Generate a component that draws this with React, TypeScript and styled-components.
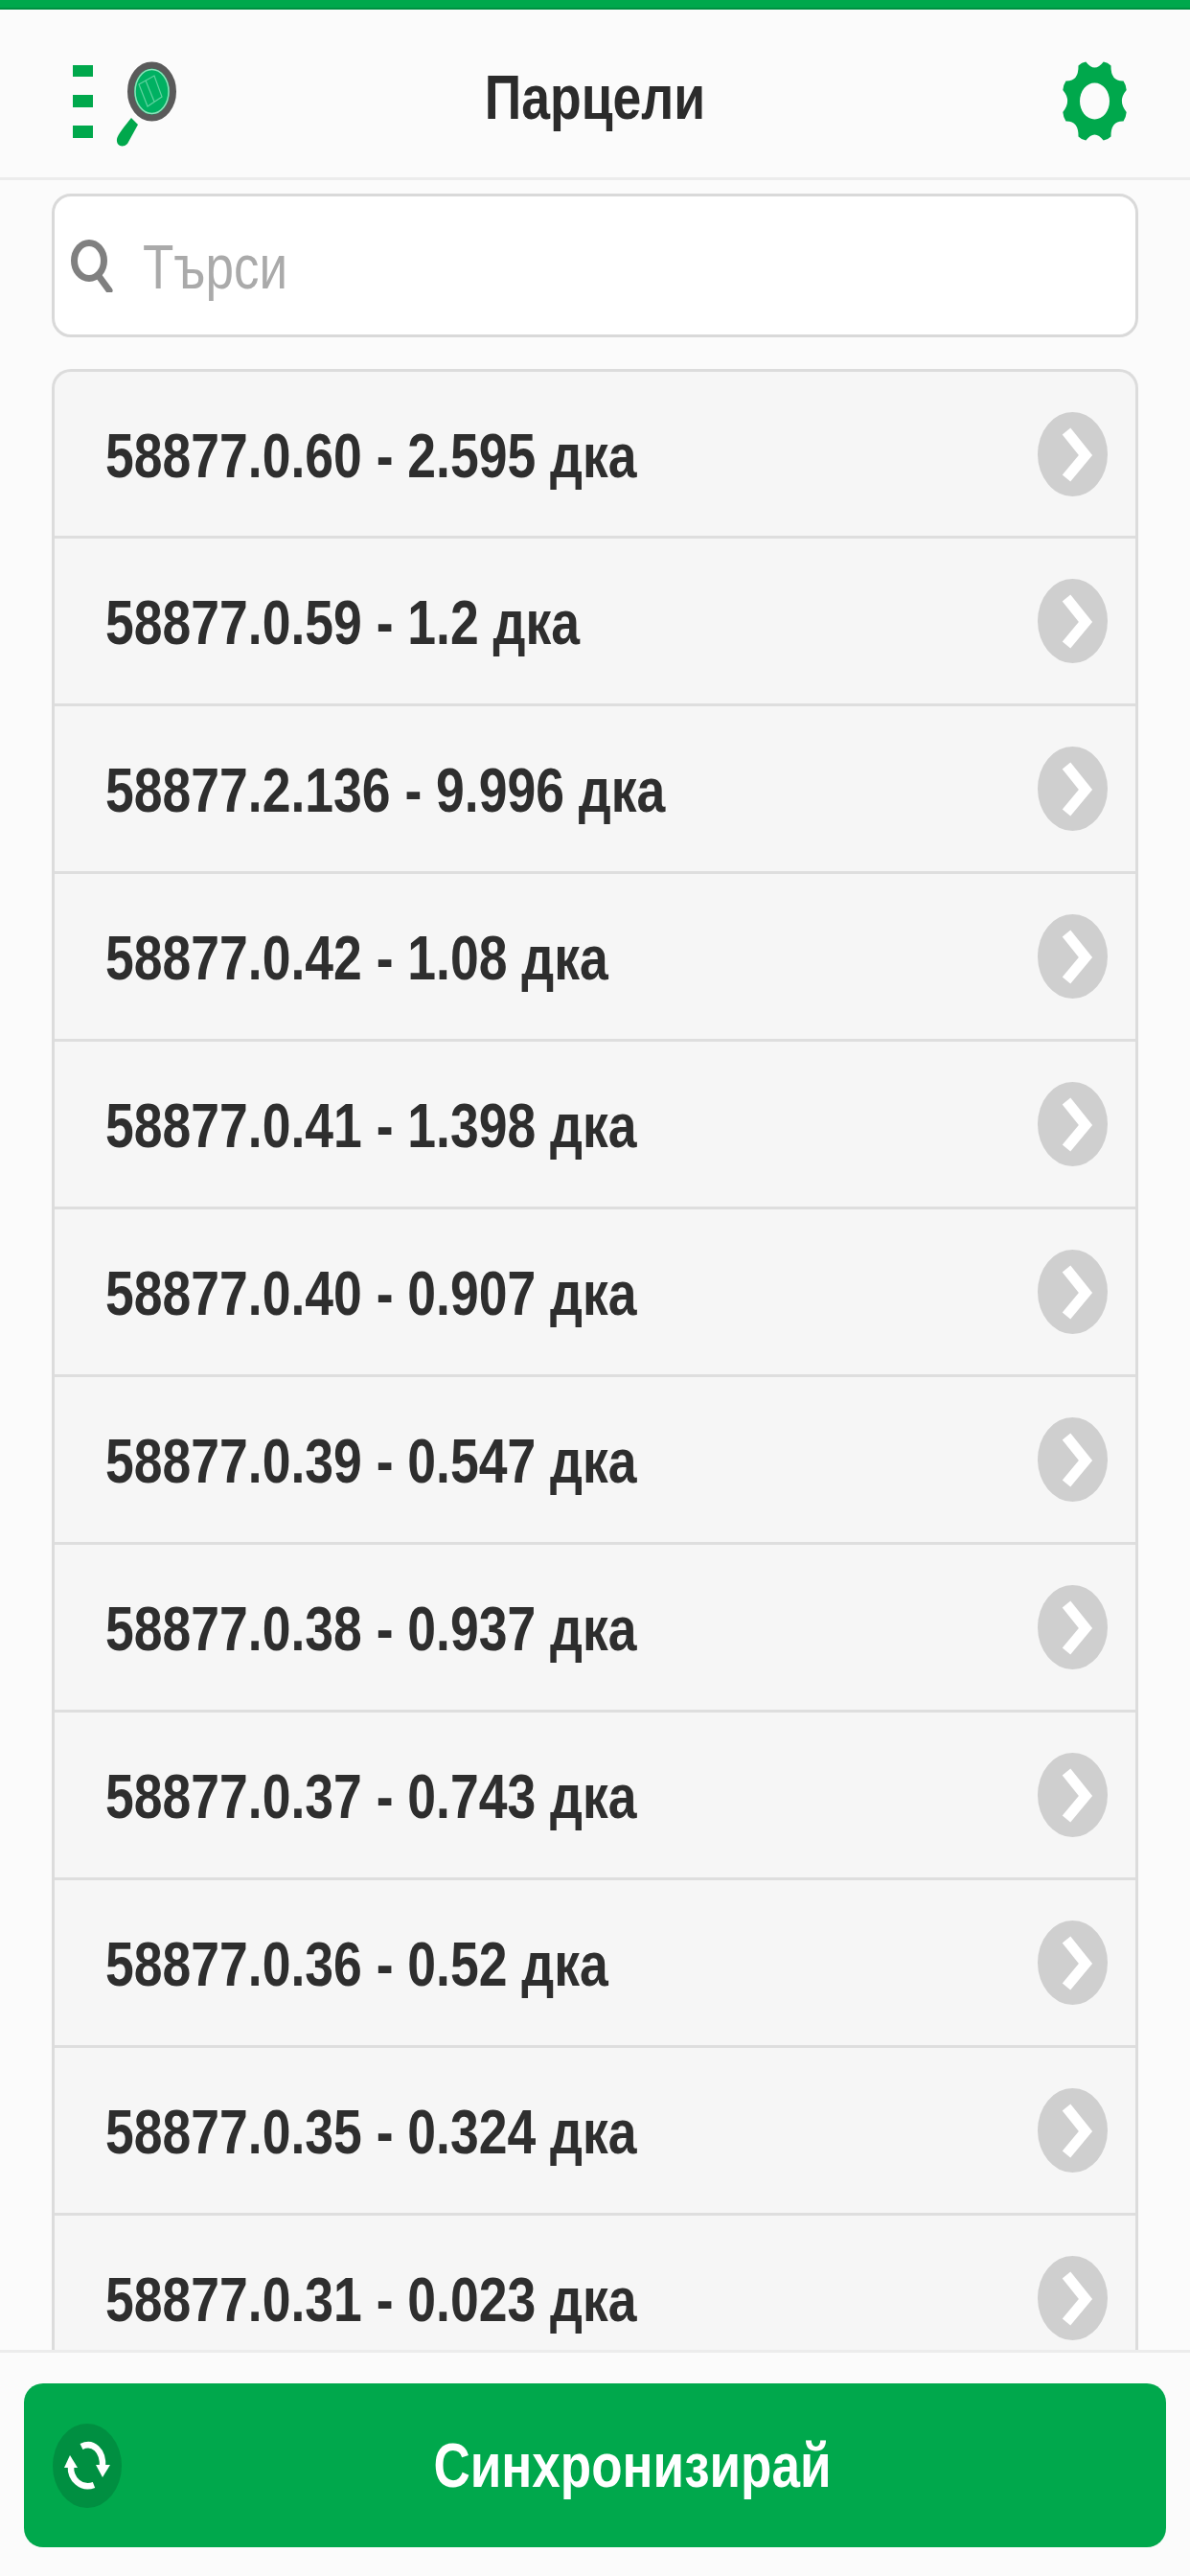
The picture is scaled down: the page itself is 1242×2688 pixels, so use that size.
import styled, { createGlobalStyle } from 'styled-components';

const GREEN = '#00a84c';

const GlobalStyle = createGlobalStyle`
  html, body {
    margin: 0;
    padding: 0;
    background: #fbfbfb;
    font-family: "Liberation Sans", Arial, sans-serif;
  }
`;

const Page = styled.div`
  width: 1242px;
  height: 2688px;
  display: flex;
  flex-direction: column;
  overflow: hidden;
  background: #fbfbfb;
`;

const TopBar = styled.div`
  height: 10px;
  flex: none;
  background: ${GREEN};
  border-bottom: 2px solid #008f41;
  box-sizing: border-box;
`;

const Header = styled.header`
  flex: none;
  height: 178px;
  box-sizing: border-box;
  padding: 0 65px 0 76px;
  display: grid;
  grid-template-columns: 1fr auto 1fr;
  align-items: center;
  border-bottom: 3px solid #ececec;
`;

const LogoIcon = styled.svg`
  display: block;
  margin-top: 25px;
`;

const GearIcon = styled.svg`
  display: block;
  justify-self: end;
  margin-top: 16px;
`;

// the whole shot is stretched vertically, so text gets the same stretch
const Stretched = styled.span`
  display: inline-block;
  line-height: 1;
  transform: scaleY(1.22);
`;

const Title = styled(Stretched)`
  font-size: 53.5px;
  font-weight: 700;
  color: #2b2b2b;
  margin: 8px 11px 0 0;
`;

const Content = styled.main`
  flex: 1;
  min-height: 0;
  overflow: hidden;
  padding: 14px 54px 0;
`;

const SearchBox = styled.div`
  height: 150px;
  box-sizing: border-box;
  background: #fff;
  border: 3px solid #d9d9d9;
  border-radius: 20px;
  padding-left: 16px;
  display: flex;
  align-items: center;
  gap: 30px;
`;

const Placeholder = styled(Stretched)`
  font-size: 53px;
  color: #aaa;
  margin-top: 2px;
`;

const ParcelList = styled.ul`
  list-style: none;
  margin: 33px 0 0;
  padding: 0;
  background: #f6f6f6;
  border: 3px solid #dcdcdc;
  border-bottom: none;
  border-radius: 20px 20px 0 0;
`;

const ParcelRow = styled.li`
  height: 175px;
  box-sizing: border-box;
  padding: 0 29px 0 53px;
  display: flex;
  align-items: center;
  justify-content: space-between;
  border-bottom: 3px solid #dedede;

  &:first-child {
    height: 174px;
  }
`;

const ParcelLabel = styled(Stretched)`
  font-size: 53.5px;
  font-weight: 700;
  color: #2e2e2e;
  margin-top: 4px;
`;

const Footer = styled.footer`
  flex: none;
  height: 236px;
  box-sizing: border-box;
  border-top: 3px solid #ececec;
  padding: 32px 25px 0;
  background: #fbfbfb;
`;

const SyncButton = styled.button`
  width: 100%;
  height: 171px;
  border: none;
  border-radius: 20px;
  background: ${GREEN};
  padding: 0 24px 0 30px;
  display: flex;
  align-items: center;
  font-family: inherit;
`;

const SyncLabel = styled(Stretched)`
  flex: 1;
  text-align: center;
  font-size: 53px;
  font-weight: 700;
  color: #fff;
`;

const parcels = [
  '58877.0.60 - 2.595 дка',
  '58877.0.59 - 1.2 дка',
  '58877.2.136 - 9.996 дка',
  '58877.0.42 - 1.08 дка',
  '58877.0.41 - 1.398 дка',
  '58877.0.40 - 0.907 дка',
  '58877.0.39 - 0.547 дка',
  '58877.0.38 - 0.937 дка',
  '58877.0.37 - 0.743 дка',
  '58877.0.36 - 0.52 дка',
  '58877.0.35 - 0.324 дка',
  '58877.0.31 - 0.023 дка',
];

function Logo() {
  return (
    <LogoIcon width="112" height="92" viewBox="0 0 112 92">
      <g fill={GREEN}>
        <rect x="0" y="4" width="21" height="12" />
        <rect x="0" y="35" width="21" height="13" />
        <rect x="0" y="67" width="21" height="13" />
      </g>
      <ellipse cx="82.5" cy="31.5" rx="22" ry="27.5" fill="#00b162" stroke="#5a5a5a" strokeWidth="7" />
      <ellipse cx="82.5" cy="31.5" rx="17.5" ry="23" fill="none" stroke="#8fe0bb" strokeWidth="1.5" />
      <path d="M69 24 L85 15 L93 37 L78 47 Z M76 20 L85 42" fill="none" stroke="#5fd3a0" strokeWidth="1.2" />
      <path d="M61 59 L68 66 L57 86 C52 91 45 88 46 81 C47 76 54 68 61 59Z" fill={GREEN} />
    </LogoIcon>
  );
}

// 8 rounded teeth with scooped valleys, x and y radii differ because of the stretch
function gearPath() {
  const cx = 34.5;
  const cy = 42.5;
  const pt = (deg: number, k: number) => {
    const a = (deg * Math.PI) / 180;
    return `${(cx + 34.5 * k * Math.cos(a)).toFixed(1)} ${(cy + 42.5 * k * Math.sin(a)).toFixed(1)}`;
  };
  let d = '';
  for (let i = 0; i < 8; i++) {
    const tooth = 22.5 + 45 * i;
    d += i === 0 ? `M${pt(tooth - 7, 1)}` : `L${pt(tooth - 7, 1)}`;
    d += `Q${pt(tooth, 1.03)} ${pt(tooth + 7, 1)}`;
    d += `Q${pt(tooth + 22.5, 0.68)} ${pt(tooth + 38, 1)}`;
  }
  return d + 'Z';
}

function Gear() {
  return (
    <GearIcon width="69" height="85" viewBox="0 0 69 85">
      <path d={gearPath()} fill="#00a84c" />
      <ellipse cx="34.5" cy="42.5" rx="15.5" ry="19" fill="#fbfbfb" />
    </GearIcon>
  );
}

function SearchIcon() {
  return (
    <svg width="46" height="55" viewBox="0 0 46 55">
      <ellipse cx="20" cy="22" rx="15.5" ry="18.5" fill="none" stroke="#808080" strokeWidth="7" />
      <path d="M30 38 L41 53" stroke="#808080" strokeWidth="7" strokeLinecap="round" />
    </svg>
  );
}

function Chevron() {
  return (
    <svg width="73" height="88" viewBox="0 0 73 88">
      <ellipse cx="36.5" cy="44" rx="36.5" ry="44" fill="#cfcfcf" />
      <path d="M30 20 L50 45 L30 69" fill="none" stroke="#fff" strokeWidth="11" />
    </svg>
  );
}

function SyncIcon() {
  return (
    <svg width="72" height="88" viewBox="0 0 72 88">
      <ellipse cx="36" cy="44" rx="36" ry="44" fill="#008f41" />
      <g fill="none" stroke="#fff" strokeWidth="6.5">
        <path d="M30 24 C42 18 53 28 52 45" />
        <path d="M19 44 C18 58 30 69 43 64" />
      </g>
      <g fill="#fff">
        <path d="M45 43 L60 43 L52 56 Z" />
        <path d="M12 46 L26 46 L18 33 Z" />
      </g>
    </svg>
  );
}

export default function App() {
  return (
    <Page>
      <GlobalStyle />
      <TopBar />
      <Header>
        <Logo />
        <Title>Парцели</Title>
        <Gear />
      </Header>
      <Content>
        <SearchBox>
          <SearchIcon />
          <Placeholder>Търси</Placeholder>
        </SearchBox>
        <ParcelList>
          {parcels.map((parcel) => (
            <ParcelRow key={parcel}>
              <ParcelLabel>{parcel}</ParcelLabel>
              <Chevron />
            </ParcelRow>
          ))}
        </ParcelList>
      </Content>
      <Footer>
        <SyncButton>
          <SyncIcon />
          <SyncLabel>Синхронизирай</SyncLabel>
        </SyncButton>
      </Footer>
    </Page>
  );
}
